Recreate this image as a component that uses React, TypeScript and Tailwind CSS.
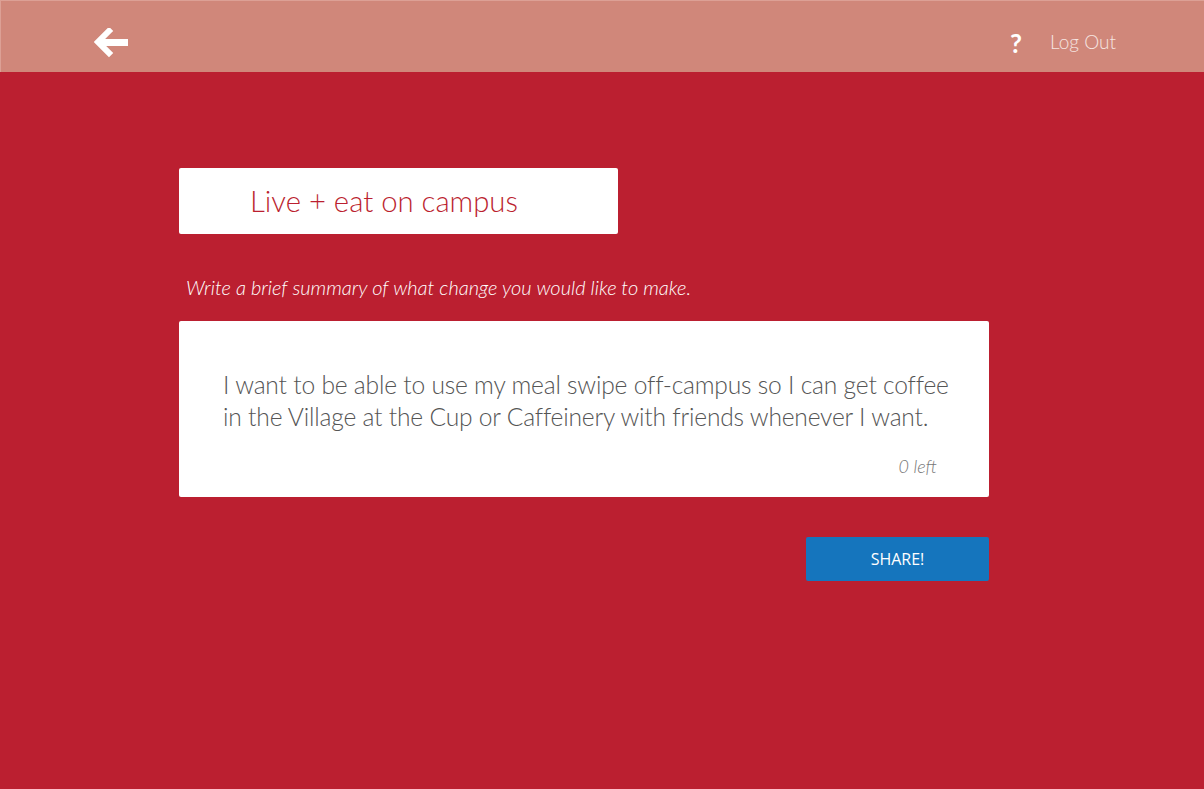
import React from "react";

export default function App() {
  return (
    <div className="w-[1204px] h-[789px] bg-[#bb1f30] flex flex-col overflow-hidden" style={{ fontFamily: "Lato, 'Open Sans', sans-serif" }}>
      <header className="h-[72px] shrink-0 bg-[#d0877a] border-t border-l border-[#dca095] flex items-center pl-[93px] pr-[88px] pt-[12px]">
        <svg width="35" height="30" viewBox="0 0 35 30" className="mt-[1px]">
          <path d="M15 3 L4 14 L15 25" fill="none" stroke="#fff" strokeWidth="6" strokeLinecap="square" strokeLinejoin="miter" />
          <rect x="8" y="11" width="26" height="7" fill="#fff" />
        </svg>
        <div className="flex-1" />
        <span className="text-white text-[26px] font-bold leading-none mr-[28px] mt-[1px]">?</span>
        <span className="text-[#f6e5e1] text-[19px] font-light">Log Out</span>
      </header>
      <main className="pl-[179px] pt-[96px] flex flex-col">
        <div className="w-[439px] h-[66px] bg-white rounded-[2px] flex items-center pl-[71px]">
          <span className="text-[#bb1f30] text-[29.3px] font-light">Live + eat on campus</span>
        </div>
        <p className="mt-[41px] ml-[7px] text-white italic font-light text-[20px] leading-[24px]">
          Write a brief summary of what change you would like to make.
        </p>
        <div className="mt-[22px] w-[810px] h-[176px] bg-white rounded-[2px] flex flex-col pl-[44px] pr-[36px] pt-[48px]">
          <p className="text-[#555] font-light text-[24.6px] leading-[32px] tracking-[-0.2px]">
            I want to be able to use my meal swipe off-campus so I can get coffee in the Village at the Cup or Caffeinery with friends whenever I want.
          </p>
          <div className="mt-[20px] pr-[16px] text-right text-[#777] italic font-light text-[18px]">0 left</div>
        </div>
        <div className="w-[810px] flex justify-end mt-[40px]">
          <button className="w-[183px] h-[44px] bg-[#1575bd] rounded-[2px] text-white text-[16px] font-normal flex items-center justify-center" style={{ fontFamily: "'Open Sans', sans-serif" }}>
            SHARE!
          </button>
        </div>
      </main>
    </div>
  );
}
